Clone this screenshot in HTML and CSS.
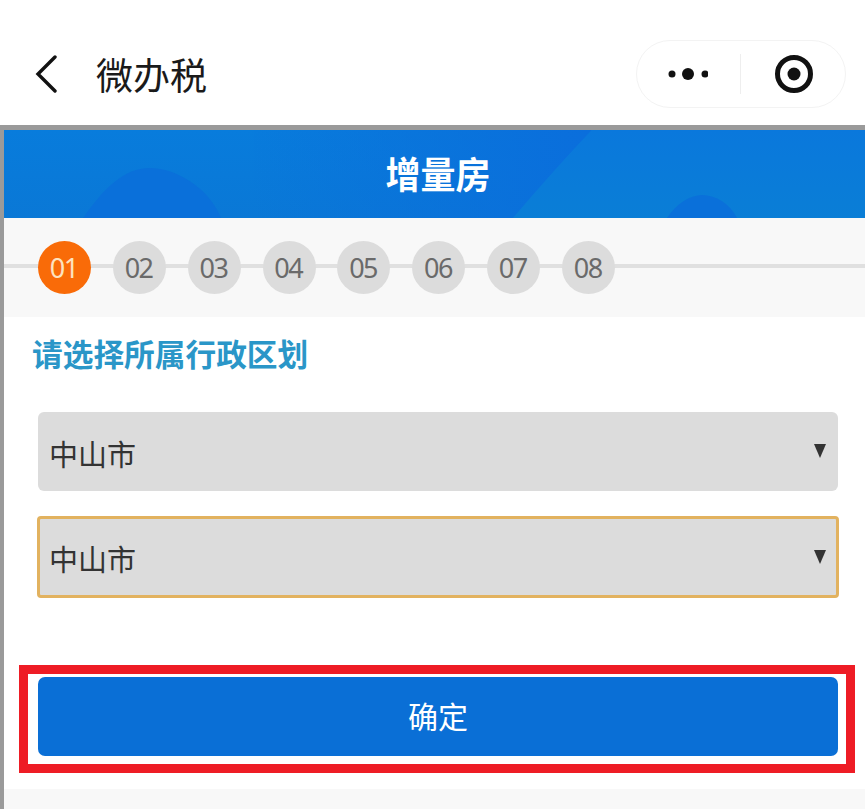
FILE: index.html
```html
<!DOCTYPE html>
<html lang="zh-CN">
<head>
<meta charset="utf-8">
<title>微办税</title>
<link rel="stylesheet" href="styles.css">
</head>
<body>
<nav class="nav">
  <div class="nav-left">
    <svg class="back" width="24" height="38" viewBox="0 0 24 38"><path d="M21 2 L4 19 L21 36" fill="none" stroke="#111" stroke-width="3.4" stroke-linecap="round"/></svg>
    <span class="nav-title">微办税</span>
  </div>
  <div class="capsule">
    <div class="capsule-cell capsule-more">
      <svg width="40" height="14" viewBox="0 0 40 14"><circle cx="4" cy="7" r="3.5" fill="#111"/><circle cx="20" cy="7" r="6" fill="#111"/><circle cx="37" cy="7" r="3.5" fill="#111"/></svg>
    </div>
    <div class="capsule-cell capsule-target">
      <svg width="40" height="40" viewBox="0 0 40 40"><circle cx="20" cy="20" r="16.5" fill="none" stroke="#111" stroke-width="5"/><circle cx="20" cy="20" r="6.5" fill="#111"/></svg>
    </div>
  </div>
</nav>
<main class="page">
  <header class="banner">
    <svg class="banner-art" width="861" height="88" viewBox="0 0 861 88">
      <defs>
        <linearGradient id="sky" x1="0" y1="0" x2="0" y2="1"><stop offset="0" stop-color="#087cdc"/><stop offset="1" stop-color="#0a78d6"/></linearGradient>
        <linearGradient id="sweep" gradientUnits="userSpaceOnUse" x1="250" y1="88" x2="588" y2="0"><stop offset="0" stop-color="#0a6edc" stop-opacity="0"/><stop offset="1" stop-color="#0a6edc" stop-opacity="1"/></linearGradient>
        <linearGradient id="right" x1="0" y1="0" x2="0" y2="1"><stop offset="0" stop-color="#0a78dc"/><stop offset="1" stop-color="#0a7ed6"/></linearGradient>
      </defs>
      <rect width="861" height="88" fill="url(#sky)"/>
      <path d="M250 0 H588 Q550 40 509 88 H250Z" fill="url(#sweep)"/>
      <path d="M588 0 H861 V88 H509 Q550 40 588 0Z" fill="url(#right)"/>
      <path d="M79 88 C100 58 120 38 146 38 C172 38 205 58 217 88Z" fill="#0a70da"/>
      <path d="M663 88 C672 74 686 65 698 65 C712 65 726 74 733 88Z" fill="#0a70da"/>
    </svg>
    <h1 class="banner-title">增量房</h1>
  </header>
  <section class="steps">
    <ol class="step-list">
      <li class="step step-active">01</li>
      <li class="step">02</li>
      <li class="step">03</li>
      <li class="step">04</li>
      <li class="step">05</li>
      <li class="step">06</li>
      <li class="step">07</li>
      <li class="step">08</li>
    </ol>
  </section>
  <section class="form">
    <h2 class="form-title">请选择所属行政区划</h2>
    <div class="select">
      <span>中山市</span><i class="caret"></i>
    </div>
    <div class="select select-focus">
      <span>中山市</span><i class="caret"></i>
    </div>
    <div class="highlight">
      <button class="confirm" type="button">确定</button>
    </div>
  </section>
  <div class="footer-strip"></div>
</main>
</body>
</html>
```
FILE: styles.css
```css
* { box-sizing: border-box; }
html, body { margin: 0; height: 100%; }
body {
  width: 865px;
  height: 809px;
  overflow: hidden;
  background: #fff;
  display: flex;
  flex-direction: column;
  font-family: "Noto Sans CJK SC", "Noto Sans", sans-serif;
}
.nav {
  height: 125px;
  flex: none;
  display: flex;
  align-items: flex-start;
  justify-content: space-between;
  padding: 40px 19px 0 34px;
}
.nav-left { display: flex; align-items: center; height: 68px; }
.back { display: block; }
.nav-title {
  margin-left: 38px;
  font-size: 37px;
  line-height: 68px;
  color: #1a1a1a;
}
.capsule {
  width: 210px;
  height: 68px;
  border: 1.5px solid #f3f3f3;
  border-radius: 34px;
  display: flex;
  align-items: center;
}
.capsule-cell {
  width: 104px;
  height: 40px;
  display: flex;
  align-items: center;
  justify-content: center;
}
.capsule-more { border-right: 1.5px solid #eee; padding-right: 2px; }
.capsule-target { padding-left: 1px; }
.page {
  flex: 1;
  min-height: 0;
  display: flex;
  flex-direction: column;
  border-top: 5px solid #9a9a9a;
  border-left: 4px solid #9a9a9a;
}
.banner {
  position: relative;
  height: 88px;
  flex: none;
  display: flex;
  align-items: center;
  justify-content: center;
  overflow: hidden;
  background: #0a78d8;
  padding-left: 7px;
}
.banner-art { position: absolute; left: 0; top: 0; display: block; }
.banner-title {
  position: relative;
  margin: -2px 0 0;
  font-size: 35px;
  line-height: 44px;
  font-weight: 700;
  color: #fff;
  transform: scaleY(1.06);
}
.steps {
  height: 99px;
  flex: none;
  background: #f8f8f8;
  padding-top: 23px;
  background-image: linear-gradient(#e0e0e0, #e0e0e0);
  background-repeat: no-repeat;
  background-size: 100% 4px;
  background-position: 0 46px;
}
.step-list {
  list-style: none;
  margin: 0;
  padding: 0 0 0 34px;
  display: flex;
  gap: 21.85px;
}
.step {
  width: 53px;
  height: 53px;
  border-radius: 50%;
  background: #dcdcdc;
  color: #6a6a6a;
  font-family: "Noto Sans", sans-serif;
  font-size: 27px;
  letter-spacing: -1.5px;
  line-height: 54px;
  padding-right: 1.5px;
  text-align: center;
}
.step-active { background: #f96b08; color: #fde3c0; }
.form {
  flex: 1;
  min-height: 0;
  padding: 16px 0 0;
}
.form-title {
  margin: 0 0 39px 28px;
  font-size: 30.7px;
  line-height: 40px;
  font-weight: 700;
  color: #2a96c8;
}
.select {
  margin: 0 27px 25px 34px;
  height: 79px;
  border-radius: 6px;
  background: #dcdcdc;
  padding: 0 12px 0 11px;
  display: flex;
  align-items: center;
  justify-content: space-between;
  font-size: 29px;
  color: #333;
}
.select span { margin-top: 2px; }
.select-focus {
  margin: 0 26px 67px 33px;
  height: 82px;
  border: 3px solid #e2b25f;
  border-radius: 4px;
  padding: 0 10px 0 9px;
}
.caret {
  width: 0;
  height: 0;
  margin-top: -1px;
  border-left: 6px solid transparent;
  border-right: 6px solid transparent;
  border-top: 14px solid #333;
}
.highlight {
  margin-left: 15px;
  width: 836px;
  height: 108px;
  border: 9px solid #ee1c25;
  padding: 3px 8px 7px 10px;
}
.confirm {
  display: block;
  width: 100%;
  height: 79px;
  border: 0;
  border-radius: 7px;
  background: #0a6fd6;
  color: #fff;
  font: inherit;
  font-size: 30px;
  padding: 0 0 3px;
}
.footer-strip {
  height: 20px;
  flex: none;
  background: #f8f8f8;
}
```
